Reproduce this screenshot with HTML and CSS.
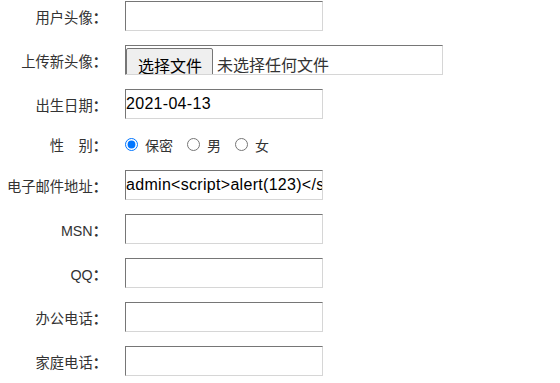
FILE: index.html
```html
<!DOCTYPE html>
<html lang="zh-CN">
<head>
<meta charset="utf-8">
<title>用户信息</title>
<link rel="stylesheet" href="styles.css">
</head>
<body>
<form class="form">
  <div class="label">用户头像<span class="colon">：</span></div>
  <div class="field"><input class="text" type="text" value=""></div>

  <div class="label">上传新头像<span class="colon">：</span></div>
  <div class="field">
    <div class="file">
      <span class="file-btn">选择文件</span>
      <span class="file-name">未选择任何文件</span>
    </div>
  </div>

  <div class="label">出生日期<span class="colon">：</span></div>
  <div class="field"><input class="text" type="text" value="2021-04-13"></div>

  <div class="label">性　别<span class="colon">：</span></div>
  <div class="field radios">
    <label class="opt"><input type="radio" name="sex" checked><span>保密</span></label>
    <label class="opt"><input type="radio" name="sex"><span>男</span></label>
    <label class="opt"><input type="radio" name="sex"><span>女</span></label>
  </div>

  <div class="label">电子邮件地址<span class="colon">：</span></div>
  <div class="field"><input class="text" type="text" value="admin&lt;script&gt;alert(123)&lt;/script&gt;"></div>

  <div class="label">MSN<span class="colon">：</span></div>
  <div class="field"><input class="text" type="text" value=""></div>

  <div class="label">QQ<span class="colon">：</span></div>
  <div class="field"><input class="text" type="text" value=""></div>

  <div class="label">办公电话<span class="colon">：</span></div>
  <div class="field"><input class="text" type="text" value=""></div>

  <div class="label">家庭电话<span class="colon">：</span></div>
  <div class="field"><input class="text" type="text" value=""></div>
</form>
</body>
</html>
```
FILE: styles.css
```css
html, body {
  margin: 0;
  padding: 0;
  background: #fff;
}

.form {
  display: grid;
  grid-template-columns: 107px auto;
  column-gap: 18px;
  row-gap: 14px;
  padding-top: 1px;
  align-items: center;
  font-family: "Liberation Sans", "Noto Sans CJK SC", sans-serif;
}

.label {
  text-align: right;
  font-size: 14.3px;
  color: #333;
  line-height: 20px;
  padding-top: 2px;
  white-space: nowrap;
}

.colon {
  font-family: "Noto Sans CJK TC", sans-serif;
  font-weight: bold;
}

.field {
  display: flex;
  align-items: center;
  height: 30px;
}

.text {
  box-sizing: border-box;
  width: 198px;
  height: 30px;
  margin: 0;
  padding: 0;
  border: 1px solid;
  border-color: #767676 #d6d6d6 #d6d6d6 #767676;
  font-family: "Liberation Sans", Arial, sans-serif;
  font-size: 16px;
  letter-spacing: 0.3px;
  color: #000;
  background: #fff;
  outline: none;
}

.file {
  box-sizing: border-box;
  width: 318px;
  height: 30px;
  border: 1px solid;
  border-color: #767676 #d6d6d6 #d6d6d6 #767676;
  overflow: hidden;
  display: flex;
  align-items: flex-start;
  font-family: "Noto Sans CJK SC", sans-serif;
  font-size: 16px;
  line-height: 22px;
}

.file-btn {
  box-sizing: border-box;
  margin-top: 2px;
  width: 87px;
  height: 32px;
  padding: 5px 0 0 11px;
  border: 1px solid #767676;
  border-radius: 2px;
  background: #efefef;
  color: #000;
}

.file-name {
  margin-top: 7px;
  margin-left: 4px;
  color: #333;
}

.radios {
  height: 23px;
}

.opt {
  display: flex;
  align-items: center;
  margin-right: 14px;
  font-size: 14px;
  color: #333;
  font-family: "Noto Sans CJK SC", sans-serif;
}

.opt input {
  width: 13px;
  height: 13px;
  margin: 0 7px 0 0;
  accent-color: #0075ff;
}
```
